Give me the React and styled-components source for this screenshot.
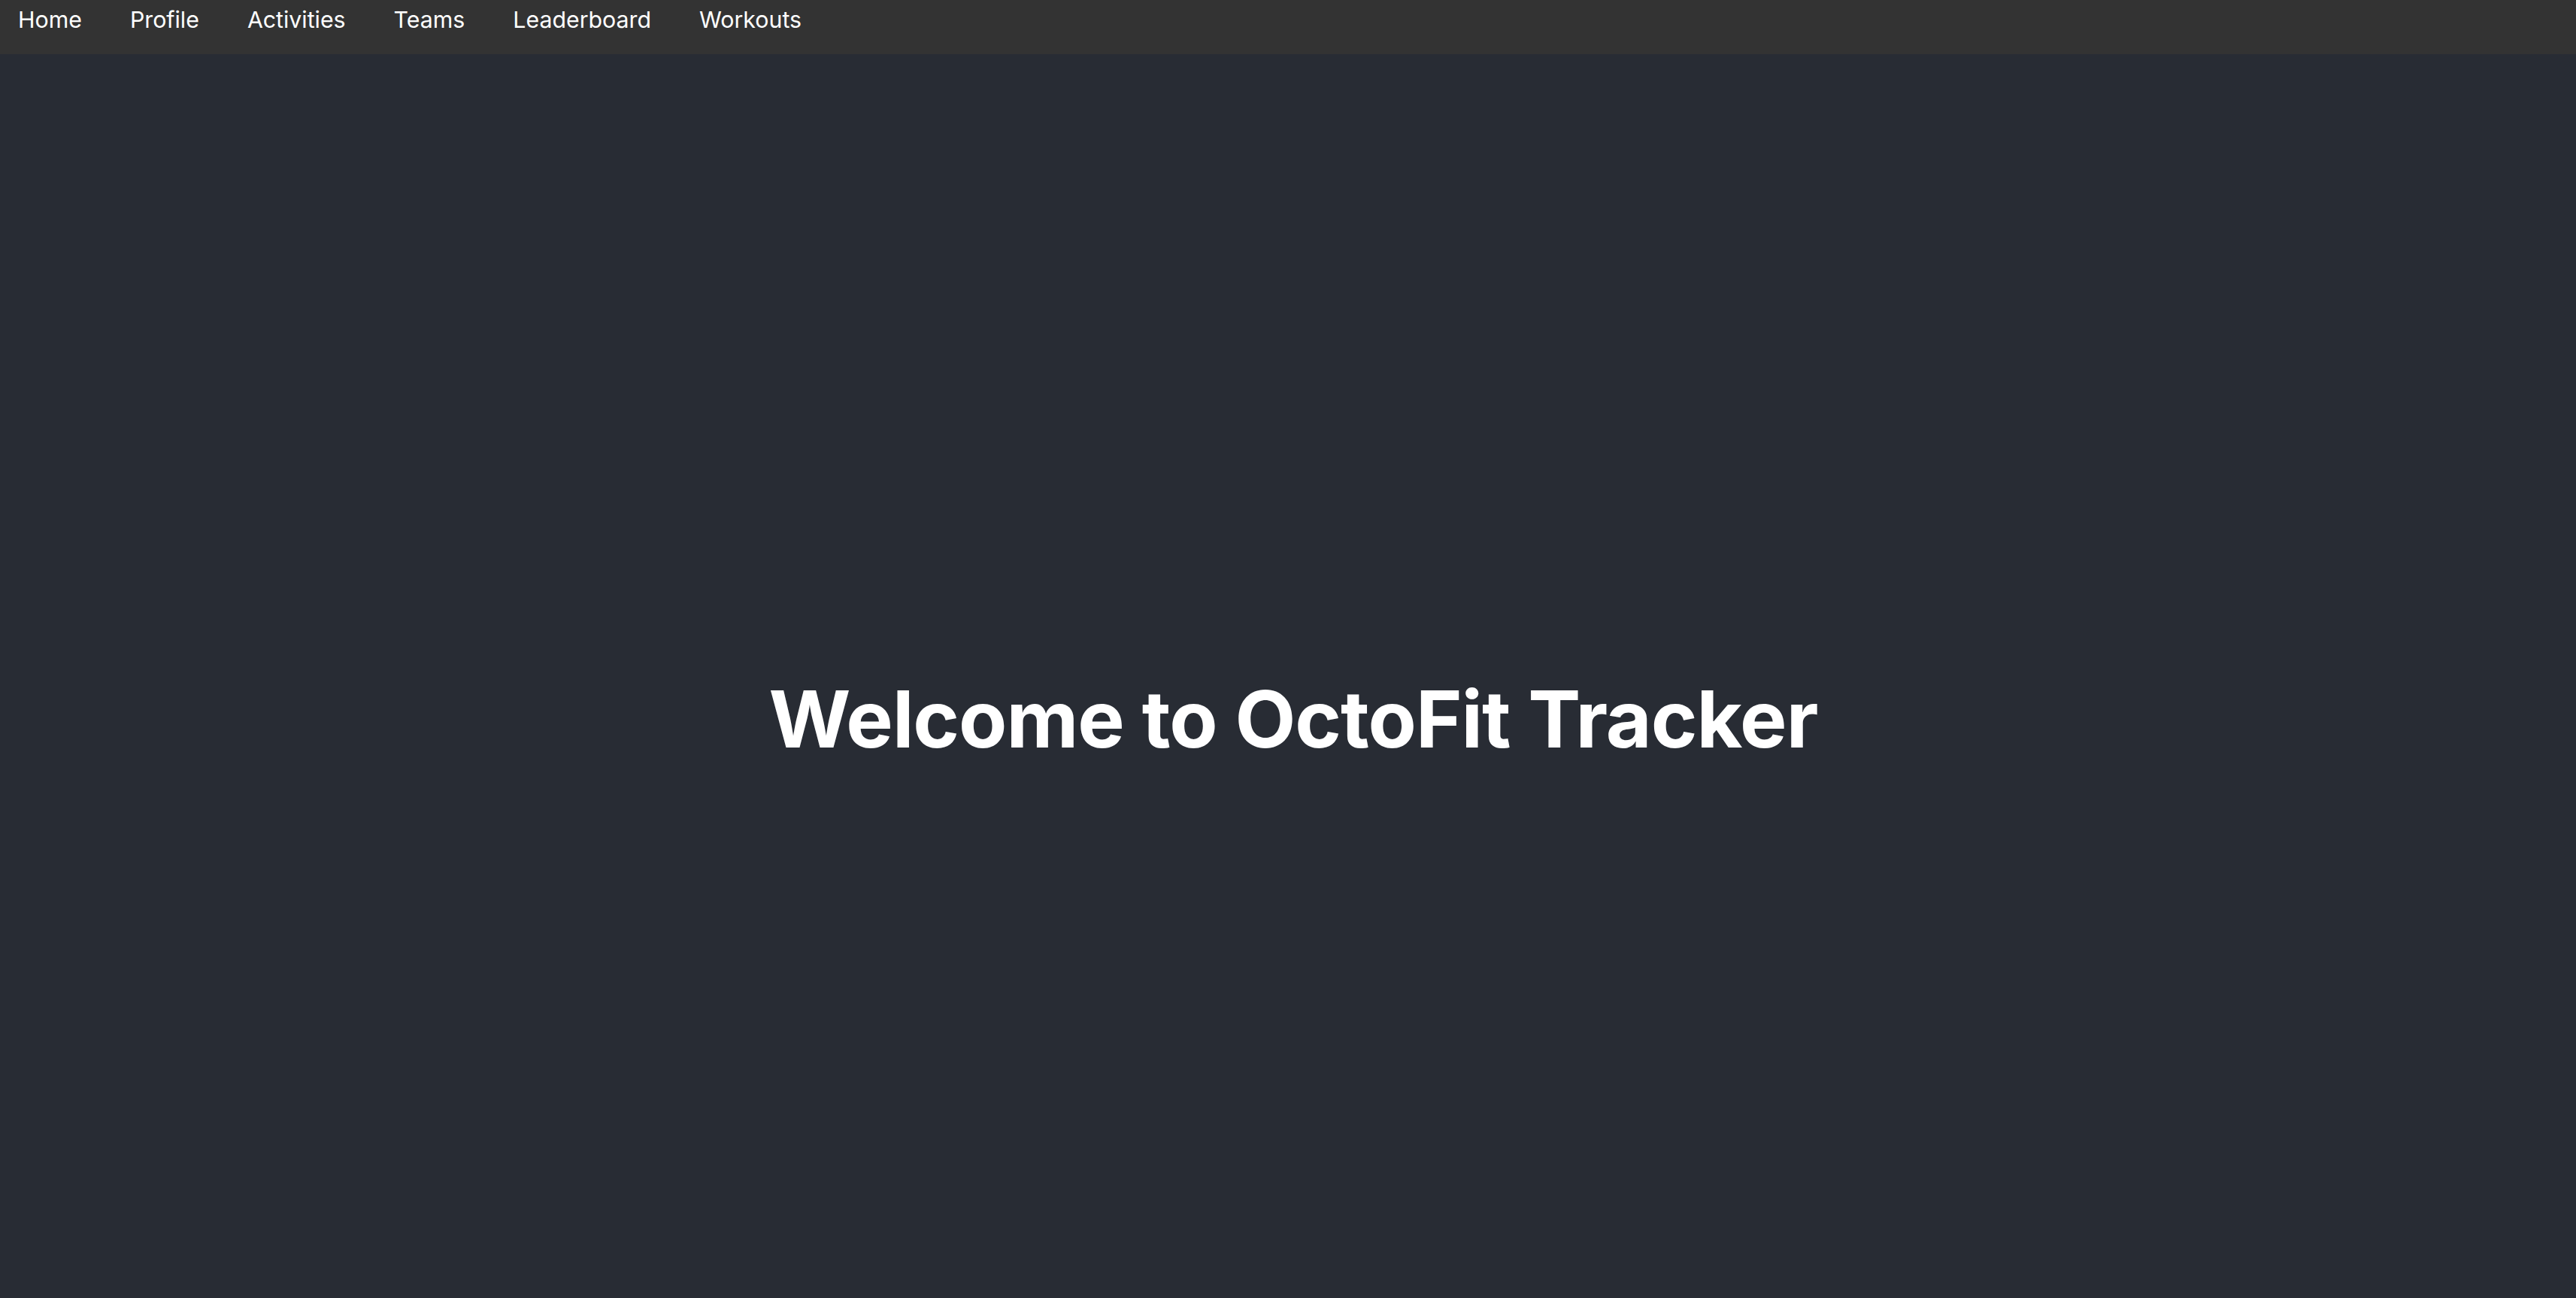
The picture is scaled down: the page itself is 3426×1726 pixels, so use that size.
import React from "react";
import styled, { createGlobalStyle } from "styled-components";

const GlobalStyle = createGlobalStyle`
  html, body {
    margin: 0;
    padding: 0;
    background-color: #282c34;
    font-family: Inter, "Noto Sans", sans-serif;
  }
`;

const Page = styled.div`
  display: flex;
  flex-direction: column;
  background-color: #282c34;
`;

const StyledNavbar = styled.nav`
  height: 72px;
  background-color: #333333;
  box-sizing: border-box;
  padding: 0 24px;
`;

const StyledUl = styled.ul`
  display: flex;
  gap: 64px;
  list-style-type: none;
  margin: 0;
  padding: 0;
`;

const StyledLi = styled.li`
  padding-top: 6px;
`;

const StyledLink = styled.a`
  color: white;
  text-decoration: none;
  font-size: 30.3px;
  line-height: 40px;
  cursor: pointer;
`;

const Header = styled.header`
  min-height: 100vh;
  box-sizing: border-box;
  padding: 40px 0 0 14px;
  display: flex;
  align-items: center;
  justify-content: center;
`;

const Title = styled.h1`
  margin: 0;
  color: white;
  font-size: 105px;
  font-weight: 700;
  letter-spacing: -1px;
`;

const links = ["Home", "Profile", "Activities", "Teams", "Leaderboard", "Workouts"];

const App = () => {
  return (
    <Page>
      <GlobalStyle />
      <StyledNavbar>
        <StyledUl>
          {links.map((l) => (
            <StyledLi key={l}>
              <StyledLink>{l}</StyledLink>
            </StyledLi>
          ))}
        </StyledUl>
      </StyledNavbar>
      <Header>
        <Title>Welcome to OctoFit Tracker</Title>
      </Header>
    </Page>
  );
};

export default App;
